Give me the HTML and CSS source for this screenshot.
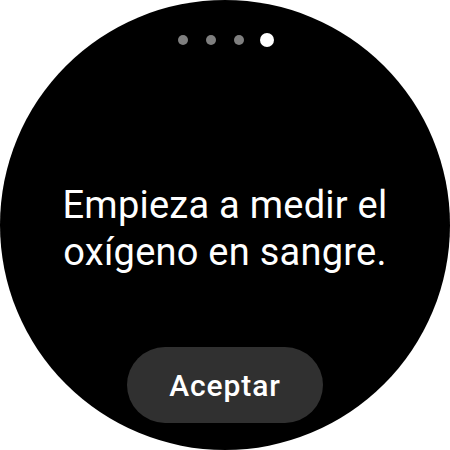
FILE: index.html
```html
<!DOCTYPE html>
<html lang="es">
<head>
<meta charset="utf-8">
<link rel="stylesheet" href="styles.css">
</head>
<body>
<div class="watch">
  <div class="dots">
    <span class="dot"></span>
    <span class="dot"></span>
    <span class="dot"></span>
    <span class="dot active"></span>
  </div>
  <p class="message">Empieza a medir el<br>oxígeno en sangre.</p>
  <button class="accept">Aceptar</button>
</div>
</body>
</html>
```
FILE: styles.css
```css
html, body {
  margin: 0;
  padding: 0;
  background: #ffffff;
}
.watch {
  width: 450px;
  height: 450px;
  border-radius: 50%;
  background: #000000;
  display: flex;
  flex-direction: column;
  align-items: center;
  padding-top: 33px;
  box-sizing: border-box;
  font-family: Roboto, "Liberation Sans", sans-serif;
}
.dots {
  display: flex;
  align-items: center;
  gap: 18px;
  height: 14px;
  margin-left: 2px;
}
.dot {
  width: 10px;
  height: 10px;
  border-radius: 50%;
  background: #7f7f7f;
}
.dot.active {
  width: 14px;
  height: 14px;
  background: #ffffff;
  margin-left: -2px;
}
.message {
  margin: 135px 0 0;
  color: #ffffff;
  font-size: 38px;
  line-height: 47px;
  letter-spacing: 0.25px;
  text-align: center;
  font-weight: 400;
}
.accept {
  margin-top: 71px;
  width: 196px;
  height: 76px;
  border: none;
  border-radius: 38px;
  background: #303030;
  color: #ffffff;
  font-family: Roboto, "Liberation Sans", sans-serif;
  font-size: 30px;
  font-weight: 500;
  letter-spacing: 0.9px;
  padding: 0;
}
```
